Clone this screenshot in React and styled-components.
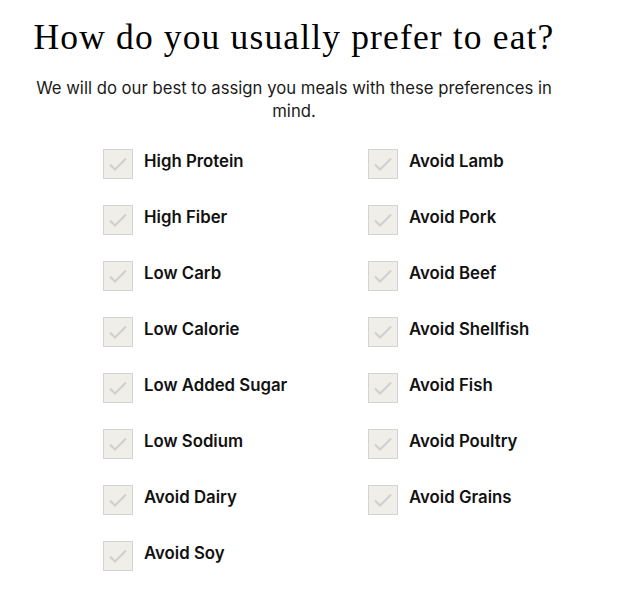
import React from "react";
import styled, { createGlobalStyle } from "styled-components";

const GlobalStyle = createGlobalStyle`
  body {
    margin: 0;
    background: #ffffff;
    font-family: "Inter", "Noto Sans", sans-serif;
    color: #111111;
  }
`;

const Page = styled.div`
  width: 540px;
  margin-left: 24px;
  padding-top: 15px;
  display: flex;
  flex-direction: column;
  align-items: center;
`;

const Title = styled.h1`
  margin: 0;
  font-family: "Liberation Serif", "Times New Roman", serif;
  font-weight: 400;
  font-size: 35.5px;
  letter-spacing: 1.15px;
  line-height: 44px;
  color: #000;
  text-align: center;
  white-space: nowrap;
`;

const Subtitle = styled.p`
  margin: 18px 0 0;
  font-size: 16.7px;
  line-height: 23px;
  text-align: center;
  color: #1a1a1a;
`;

const Grid = styled.div`
  margin-top: 26px;
  width: 100%;
  display: grid;
  grid-template-columns: 265px 1fr;
  grid-auto-flow: column;
  grid-template-rows: repeat(8, 56px);
  padding-left: 79px;
  box-sizing: border-box;
`;

const Option = styled.label`
  display: flex;
  align-items: flex-start;
  gap: 11px;
  cursor: pointer;
`;

const Box = styled.span`
  width: 28px;
  height: 28px;
  flex: none;
  border: 1px solid #d3d3d3;
  background: #efeee9;
  display: flex;
  align-items: center;
  justify-content: center;
`;

const Label = styled.span`
  font-size: 16.8px;
  font-weight: 600;
  line-height: 22px;
  padding-top: 1px;
  color: #111;
`;

const Check = () => (
  <svg width="20" height="16" viewBox="0 0 20 16">
    <path d="M2 8.5 L7 13.5 L18 2.5" fill="none" stroke="#cfcfcf" strokeWidth="2" />
  </svg>
);

const left = [
  "High Protein",
  "High Fiber",
  "Low Carb",
  "Low Calorie",
  "Low Added Sugar",
  "Low Sodium",
  "Avoid Dairy",
  "Avoid Soy",
];

const right = [
  "Avoid Lamb",
  "Avoid Pork",
  "Avoid Beef",
  "Avoid Shellfish",
  "Avoid Fish",
  "Avoid Poultry",
  "Avoid Grains",
];

export default function App() {
  const all = [...left, ...right];
  return (
    <>
      <GlobalStyle />
      <Page>
        <Title>How do you usually prefer to eat?</Title>
        <Subtitle>
          We will do our best to assign you meals with these preferences in mind.
        </Subtitle>
        <Grid>
          {all.map((name) => (
            <Option key={name}>
              <Box>
                <Check />
              </Box>
              <Label>{name}</Label>
            </Option>
          ))}
        </Grid>
      </Page>
    </>
  );
}
